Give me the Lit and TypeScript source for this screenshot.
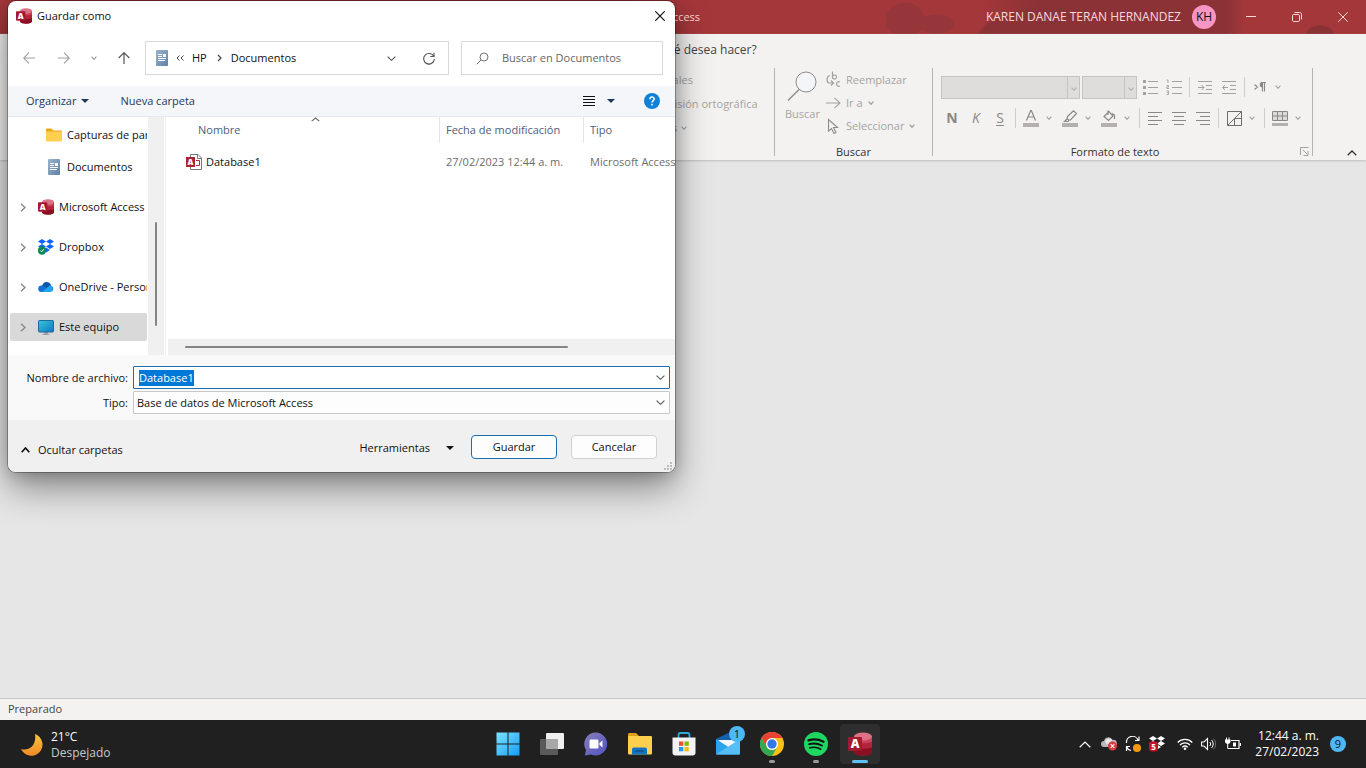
import { LitElement, html, css, svg, TemplateResult, nothing } from "lit";
import { customElement, query } from "lit/decorators.js";
import { classMap } from "lit/directives/class-map.js";

const icon = (w: number, h: number, body: TemplateResult) => html`
  <svg width=${w} height=${h} viewBox="0 0 ${w} ${h}" fill="none" aria-hidden="true">${body}</svg>
`;

const chevronDown = (w = 9, h = 5, sw = 1.1) =>
  icon(w, h, svg`<path d="M.6 .6 L${w / 2} ${h - 0.7} L${w - 0.6} .6" stroke="currentColor" stroke-width=${sw}/>`);
const caretDown = icon(8, 4, svg`<path d="M0 0H8L4 4Z" fill="currentColor"/>`);
const chevronUp = (w = 9, h = 6, sw = 1.6) =>
  icon(w, h, svg`<path d="M.7 ${h - 0.8} L${w / 2} 1 L${w - 0.7} ${h - 0.8}" stroke="currentColor" stroke-width=${sw}/>`);

const accessLogo = (size: number) => html`
  <svg width=${size} height=${size} viewBox="0 0 24 24" aria-hidden="true">
    <path d="M6 4.500V20c0 1.900 4 3.500 9 3.500s9-1.600 9-3.500V4.500Z" fill="#a4262c"/>
    <path d="M6 15c2 2 14 2.500 18 0v5c0 1.900-4 3.500-9 3.500S6 21.900 6 20Z" fill="#8a0f22"/>
    <path d="M6 9c3 2 15 2.500 18 0v6c-3 2-15 2.500-18 0Z" fill="#b3243a"/>
    <path d="M6 4.500v5c3 2 15 2.500 18 0v-5Z" fill="#c9405a"/>
    <ellipse cx="15" cy="4.500" rx="9" ry="4" fill="#dd7284"/>
    <rect x="0" y="5" width="14" height="14" rx="1.200" fill="#a21a30"/>
    <text x="7" y="16.300" text-anchor="middle" font-family="Open Sans" font-weight="800" font-size="12" fill="#fff">A</text>
  </svg>
`;

const documentsIcon = icon(12, 16, svg`
  <defs><linearGradient id="dg" x1="0" y1="0" x2="1" y2="1"><stop offset="0" stop-color="#9bb4cc"/><stop offset="1" stop-color="#5f81a6"/></linearGradient></defs>
  <rect x="0" y="0" width="12" height="16" rx="1" fill="url(#dg)"/>
  <path d="M2 4.500H6M2 6.500H6M2 8.500H10M2 10.500H9" stroke="#fff"/>
  <rect x="7" y="4" width="3" height="3" fill="#fff"/>`);

const folderIcon = icon(16, 14, svg`
  <path d="M0 2C0 1 .5 .5 1.500 .5H5.500L7.500 2.500H15C15.700 2.500 16 3 16 3.500V6H0Z" fill="#e8a914"/>
  <rect x="0" y="3.500" width="16" height="10" rx="1" fill="#ffd04f"/>`);

const dropboxShape = (fill: string) => svg`
  <path d="M4 0L8 2.500 4 5 0 2.500ZM12 0L16 2.500 12 5 8 2.500ZM4 5L8 7.500 4 10 0 7.500ZM12 5L16 7.500 12 10 8 7.500ZM8 8.500L12 11 8 13.500 4 11Z" fill=${fill}/>`;

const dropboxIcon = icon(16, 16, svg`
  <g>${dropboxShape("#0d62fe")}</g>
  <circle cx="4" cy="11.500" r="4.200" fill="#0e8a52"/>
  <path d="M2.300 11.500L3.600 12.800 5.800 10.300" stroke="#fff"/>`);

const oneDriveIcon = icon(16, 10, svg`
  <path d="M4 5C4 2 6 0 8.500 0 11 0 12.600 1.500 13 3.500L8 8Z" fill="#0a56a8"/>
  <path d="M3.500 10A3.300 3.300 0 0 1 3.600 3.400C5 3.200 6 4 7 5L12 10Z" fill="#1173cf"/>
  <path d="M4 10L10.500 4.500C11 3.600 12.500 3.300 13.500 3.800A3.300 3.300 0 0 1 13 10Z" fill="#26a3ee"/>`);

const monitorIcon = icon(16, 15, svg`
  <defs><linearGradient id="mg" x1="0" y1="0" x2="1" y2="1"><stop offset="0" stop-color="#33cbd3"/><stop offset="1" stop-color="#1173c6"/></linearGradient></defs>
  <path d="M6 12H10V14H11.500V15H4.500V14H6Z" fill="#9aa3ab"/>
  <rect x=".5" y=".5" width="15" height="11.500" rx=".8" fill="url(#mg)" stroke="#20699a"/>`);

const databaseFileIcon = icon(16, 16, svg`
  <path d="M4.500 .5H12L15.500 4V15.500H4.500Z" fill="#fff" stroke="#777"/>
  <path d="M11.500 .5V4.500H15.500" stroke="#777"/>
  <path d="M10 6.500H13.500V11.500H10" stroke="#b4263d"/>
  <rect x="0" y="3" width="9" height="10" fill="#a92338"/>
  <text x="4.500" y="11" text-anchor="middle" font-family="Open Sans" font-weight="800" font-size="8" fill="#fff">A</text>`);

const gray = "#a3a1a0";
const lines = (spans: Array<[number, number]>) =>
  svg`${spans.map(([a, b], i) => svg`<path d="M${a} ${1.5 + i * 4}H${b}" stroke="#8a8886"/>`)}`;

const fmt = {
  bullets: icon(16, 16, svg`<path d="M6 2.500H16M6 8.500H16M6 14.500H16" stroke=${gray}/><path d="M1 1H4V4H1ZM1 7H4V10H1ZM1 13H4V16H1Z" fill=${gray}/>`),
  numbers: icon(16, 16, svg`<path d="M6 2.500H16M6 8.500H16M6 14.500H16" stroke=${gray}/><path d="M.5 1H2V4M.5 6.500H2.500V8H.8V9.500H3M.5 12H2.500V15.500H.5M1 13.700H2.500" stroke=${gray} stroke-width=".9"/>`),
  indent: icon(14, 14, svg`<path d="M0 1.500H14M8 5.500H14M8 9.500H14M0 13.500H14M0 7.500H6M3.500 5L6 7.500 3.500 10" stroke=${gray}/>`),
  outdent: icon(14, 14, svg`<path d="M0 1.500H14M8 5.500H14M8 9.500H14M0 13.500H14M.5 7.500H6M3 5L.5 7.500 3 10" stroke=${gray}/>`),
  direction: icon(12, 10, svg`<path d="M.5 2.500L3.500 5 .5 7.500M8.500 .5V9.500M10.500 .5V9.500M7 .5H12" stroke="#8a8886" stroke-width="1.100"/><path d="M8.500 0A2.500 2.500 0 0 0 8.500 5.500Z" fill="#8a8886"/>`),
  fontColor: icon(16, 17, svg`<path d="M3.500 10.500L7.700 .5H8.300L12.500 10.500M5 7H11" stroke="#8a8886" stroke-width="1.200"/><rect y="13" width="16" height="4" fill="#b3b0ad"/>`),
  highlight: icon(16, 17, svg`<path d="M5.500 6.500L11.500 .8 14.500 3.500 8.500 10H6.500L5 8.500ZM5.500 8.500L2.500 11.500H6L7 10" stroke="#8a8886" stroke-width="1.200"/><rect y="13" width="16" height="4" fill="#b3b0ad"/>`),
  fill: icon(16, 17, svg`<path d="M3 6.500L8 1.500 12 6 7.500 10.500ZM7 .5V5M11 3.500L13.500 5V9" stroke="#8a8886" stroke-width="1.200"/><rect y="13" width="16" height="4" fill="#b3b0ad"/>`),
  left: icon(14, 15, lines([[0, 14], [0, 10], [0, 14], [0, 10]])),
  center: icon(14, 15, lines([[0, 14], [2, 12], [0, 14], [2, 12]])),
  right: icon(14, 15, lines([[0, 14], [4, 14], [0, 14], [4, 14]])),
  borders: icon(15, 15, svg`<path d="M.5 .5H14.500V14.500H.5ZM.5 14.500L14.500 .5M7.500 7.500H14.500M7.500 7.500V14.500" stroke="#6f6d6b"/>`),
  rows: icon(16, 15, svg`<path d="M.5 .5H15.500V9.500H.5ZM.5 5H15.500M5.500 .5V9.500M10.500 .5V9.500" stroke="#8a8886" fill="#dcdad8"/><rect y="12" width="16" height="3" fill="#b3b0ad"/>`),
};

@customElement("ribbon-bar")
export class RibbonBar extends LitElement {
  static styles = css`
    :host { display: block; background: #f3f2f1; color: #444; box-shadow: 0 1px 2px #bdbdbd; position: relative; font-size: 11px; }
    svg { display: block; flex: none; }
    button { border: 0; background: none; padding: 0; margin: 0; font: inherit; color: inherit; display: flex; align-items: center; justify-content: center; }
    .tabs { height: 34px; box-sizing: border-box; padding: 0 0 3px 652px; display: flex; align-items: center; font-size: 12px; }
    .groups { display: flex; height: 88px; padding-bottom: 4px; align-items: stretch; }
    .group { border-right: 1px solid #b5b3b1; display: flex; flex-direction: column; justify-content: space-between; box-sizing: border-box; }
    .records { flex: 0 0 775px; padding-left: 656px; color: #a6a4a2; justify-content: flex-start; }
    .records button { height: 24px; justify-content: flex-start; gap: 4px; white-space: nowrap; }
    .label { text-align: center; font-size: 11px; line-height: 8px; color: #333; margin: 0; font-weight: 400; }
    .find { width: 158px; }
    .find-body { display: flex; color: #a6a4a2; gap: 6px; padding-left: 10px; }
    .big { flex-direction: column; gap: 5px; padding-top: 3px; justify-content: flex-start; }
    .stack { display: flex; flex-direction: column; }
    .stack button { height: 23px; gap: 5px; justify-content: flex-start; }
    .format { width: 380px; position: relative; }
    .row { display: flex; align-items: center; height: 24px; padding-left: 7px; }
    .rows { display: flex; flex-direction: column; gap: 7px; padding-top: 7px; }
    .row button { width: 24px; height: 24px; color: #8a8886; font-size: 14px; flex: none; }
    .row .drop { width: 15px; justify-content: flex-start; padding-left: 3px; box-sizing: border-box; color: #a3a1a0; }
    .sep { width: 7px; height: 20px; display: flex; justify-content: center; flex: none; }
    .sep::before { content: ""; width: 1px; background: #cfcdcb; }
    .bold { font-weight: 700; }
    .italic { font-style: italic; }
    .under { text-decoration: underline; text-underline-offset: 2px; }
    .combo { display: grid; grid-template-columns: 1fr 13px; height: 23px; color: #b5b3b1; margin-right: 2px; box-sizing: border-box; }
    .combo select { grid-area: 1 / 1 / 2 / 3; appearance: none; border: 1px solid #c6c4c2; background: #dedddc; margin: 0; border-radius: 0; min-width: 0; opacity: 1; }
    .combo .arrow { grid-area: 1 / 2; border-left: 1px solid #c6c4c2; display: flex; align-items: center; justify-content: center; pointer-events: none; z-index: 1; padding-top: 3px; }
    .font { width: 139px; margin-left: 1px; }
    .size { width: 55px; margin-right: 1px; }
    .foot { display: grid; grid-template-columns: 15px 1fr 15px; align-items: center; }
    .foot .label { grid-column: 2; padding-right: 15px; }
    .foot button { color: #a3a1a0; }
    .end { flex: 1; display: flex; align-items: flex-end; justify-content: flex-end; padding-right: 9px; color: #333; }
  `;

  private tool(name: string, body: unknown, drop = false, cls = "") {
    return html`<button class=${cls} aria-label=${name}>${body}</button>${drop
      ? html`<button class="drop" aria-label="${name}: opciones">${chevronDown(6, 4)}</button>`
      : nothing}`;
  }

  render() {
    const sep = html`<span class="sep"></span>`;
    return html`
      <div class="tabs"><span>¿Qué desea hacer?</span></div>
      <div class="groups">
        <section class="group records">
          <button>Totales</button>
          <button>Revisión ortográfica</button>
          <button>Más ${chevronDown(6, 4)}</button>
        </section>
        <section class="group find">
          <div class="find-body">
            <button class="big">
              ${icon(30, 30, svg`<circle cx="19" cy="11" r="10" fill="#f3f5f8" stroke="#8f8d8b"/><path d="M12 18.500L1 29.500" stroke="#8f8d8b" stroke-width="1.400"/>`)}
              Buscar
            </button>
            <div class="stack">
              <button>
                ${icon(15, 17, svg`<path d="M6.500 .5V7.500M6.500 5.500a2 2 0 1 1 0 1M14 11a2.300 2.300 0 1 0 0 4M4 4.500C.5 5 0 11 3 12H7M5 9.500L7.500 12 5 14.500" stroke="#a3a1a0" stroke-width="1.200"/>`)}
                Reemplazar
              </button>
              <button>
                ${icon(15, 12, svg`<path d="M0 6H14M8.500 .8L14 6 8.500 11.200" stroke="#a3a1a0" stroke-width="1.100"/>`)}
                Ir a ${chevronDown(6, 4, 1.4)}
              </button>
              <button>
                ${icon(15, 16, svg`<path d="M2.500 1.500V13L5.500 10.500 8 15.500 10 14.500 7.500 9.500H11.500Z" stroke="#8f8d8b" stroke-width="1.100"/>`)}
                Seleccionar ${chevronDown(6, 4, 1.4)}
              </button>
            </div>
          </div>
          <h2 class="label">Buscar</h2>
        </section>
        <section class="group format">
          <div class="rows">
            <div class="row">
              <div class="combo font"><select disabled aria-label="Fuente"></select><span class="arrow">${chevronDown(6, 4)}</span></div>
              <div class="combo size"><select disabled aria-label="Tamaño de fuente"></select><span class="arrow">${chevronDown(6, 4)}</span></div>
              ${this.tool("Viñetas", fmt.bullets)}${this.tool("Numeración", fmt.numbers)}${sep}
              ${this.tool("Aumentar sangría", fmt.indent)}${this.tool("Disminuir sangría", fmt.outdent)}${sep}
              ${this.tool("Dirección del texto", fmt.direction, true)}
            </div>
            <div class="row">
              ${this.tool("Negrita", "N", false, "bold")}${this.tool("Cursiva", "K", false, "italic")}${this.tool("Subrayado", "S", false, "under")}${sep}
              ${this.tool("Color de fuente", fmt.fontColor, true)}${this.tool("Resaltado", fmt.highlight, true)}${this.tool("Relleno", fmt.fill, true)}${sep}
              ${this.tool("Izquierda", fmt.left)}${this.tool("Centrar", fmt.center)}${this.tool("Derecha", fmt.right)}${sep}
              ${this.tool("Líneas de división", fmt.borders, true)}${sep}
              ${this.tool("Color de fila", fmt.rows, true)}
            </div>
          </div>
          <div class="foot">
            <h2 class="label">Formato de texto</h2>
            <button aria-label="Más opciones de formato">${icon(9, 9, svg`<path d="M8.500 .5H.5V8M3 3L7.500 7.500M8 4V8.500H3.500" stroke="currentColor"/>`)}</button>
          </div>
        </section>
        <div class="end"><button aria-label="Contraer la cinta">${chevronUp(10, 6, 1.3)}</button></div>
      </div>
    `;
  }
}

interface Place { label: string; icon: TemplateResult; nested?: boolean; selected?: boolean }

@customElement("save-dialog")
export class SaveDialog extends LitElement {
  @query("#file-name") private fileName!: HTMLInputElement;

  private places: Place[] = [
    { label: "Capturas de pantalla", icon: folderIcon, nested: true },
    { label: "Documentos", icon: documentsIcon, nested: true },
    { label: "Microsoft Access", icon: accessLogo(16) },
    { label: "Dropbox", icon: dropboxIcon },
    { label: "OneDrive - Personal", icon: oneDriveIcon },
    { label: "Este equipo", icon: monitorIcon, selected: true },
  ];

  firstUpdated() {
    this.fileName.focus();
    this.fileName.select();
  }

  static styles = css`
    :host { display: flex; flex-direction: column; background: #fff; border-radius: 8px; overflow: hidden; font-size: 11px; color: #111;
      box-shadow: 0 0 0 1px rgba(0, 0, 0, .28), 0 16px 36px rgba(0, 0, 0, .42), 0 2px 16px rgba(0, 0, 0, .2); }
    svg { display: block; flex: none; }
    button { border: 0; background: none; padding: 0; margin: 0; font: inherit; color: inherit; display: flex; align-items: center; justify-content: center; }
    .title { display: flex; align-items: center; height: 30px; padding: 0 8px; gap: 5px; }
    .title h1 { font: inherit; margin: 0; flex: 1; }
    .title button { width: 14px; height: 16px; }
    .nav { display: flex; align-items: center; padding: 10px 12px 11px 8px; }
    .nav .step { width: 26px; height: 26px; color: #a0a0a0; }
    .steps { display: flex; flex: 0 0 129px; gap: 9px; }
    .nav .steps .recent { width: 16px; }
    .nav .step.up { color: #555; }
    .address { display: flex; align-items: center; flex: 0 0 304px; box-sizing: border-box; height: 34px; border: 1px solid #d9d9d9; padding: 0 13px 0 10px; gap: 8px; color: #555; }
    .address a { color: #111; text-decoration: none; padding-right: 2px; }
    .address .grow { flex: 1; }
    .address button { width: 13px; height: 16px; margin-left: 16px; }
    .search { display: flex; align-items: center; flex: 1; height: 32px; border: 1px solid #d9d9d9; margin-left: 12px; padding-left: 14px; gap: 13px; color: #777; min-width: 0; }
    input { font: inherit; border: 0; outline: 0; background: none; padding: 0; margin: 0; min-width: 0; }
    .search input { flex: 1; }
    .search input::placeholder { color: #666; opacity: 1; }
    .commands { display: flex; align-items: center; height: 30px; padding: 0 15px 0 18px; background: #f4f6f9; border-bottom: 1px solid #e4e8ee; color: #1e395b; }
    .commands button { gap: 5px; }
    .commands .new { margin-left: 31px; }
    .commands .view { margin-left: auto; gap: 12px; margin-right: 29px; }
    .body { display: grid; grid-template-columns: 140px 16px 2px 1fr; height: 238px; }
    .tree { overflow: hidden; padding: 4px 1px 0 2px; display: flex; flex-direction: column; gap: 12px; }
    .place { display: grid; grid-template-columns: 28px 16px 1fr; align-items: center; height: 28px; flex: none; white-space: nowrap; overflow: hidden; text-align: left; border-radius: 2px; }
    .place svg { justify-self: center; }
    .place .text { padding-left: 5px; overflow: hidden; }
    .place.nested { grid-template-columns: 36px 16px 1fr; }
    .place.nested:first-child { margin-bottom: -8px; }
    .place.selected { background: #d9d9d9; }
    .arrow { color: #8a8a8a; justify-self: start; padding-left: 10px; }
    .vbar { background: #f0f0f0; display: flex; flex-direction: column; align-items: center; padding-top: 105px; }
    .vbar span { width: 2px; height: 104px; background: #858585; border-radius: 1px; }
    .divider { border-right: 1px solid #f0f0f0; box-sizing: border-box; }
    .files { display: flex; flex-direction: column; overflow: hidden; padding-left: 2px; min-width: 0; position: relative; }
    table { border-collapse: separate; border-spacing: 0; table-layout: fixed; width: 580px; }
    th { font-weight: 400; text-align: left; color: #4c607a; height: 26px; padding: 0 6px; border-right: 1px solid #e5e5e5; }
    td { height: 38px; padding: 0 6px; color: #6d6d6d; white-space: nowrap; }
    th.name { padding-left: 30px; }
    .file { display: flex; align-items: center; gap: 4px; color: #111; padding-left: 12px; }
    .sort { position: absolute; left: 145px; top: 0; color: #666; }
    .hbar { margin-top: auto; height: 16px; background: #f0f0f0; display: flex; align-items: center; padding-left: 17px; }
    .hbar span { width: 383px; height: 2px; background: #858585; border-radius: 1px; }
    .fields { background: #f9f9f9; display: grid; grid-template-columns: 120px 1fr; column-gap: 5px; row-gap: 2px; padding: 11px 5px 6px 0; align-items: center; }
    .fields label { text-align: right; }
    .field { height: 23px; box-sizing: border-box; display: grid; grid-template-columns: 1fr 18px; border: 1px solid #c8c8c8; background: #fdfdfd; color: #555; align-items: center; border-radius: 1px; }
    .field.active { border-color: #1a6eb4; background: #fff; }
    .field input { padding-left: 5px; color: #111; }
    .field input::selection { background: #0078d7; color: #fff; }
    .field select { grid-area: 1 / 1 / 2 / 3; appearance: none; border: 0; background: none; font: inherit; color: #111; padding: 0 0 0 3px; margin: 0; outline: 0; }
    .field .mark { grid-area: 1 / 2; pointer-events: none; display: flex; justify-content: center; }
    .footer { background: #f0f0f0; display: flex; align-items: center; height: 52px; padding: 0 18px 0 13px; position: relative; }
    .hide { gap: 8px; padding-top: 8px; }
    .tools { margin-left: auto; gap: 16px; padding-top: 3px; margin-right: 17px; }
    .action { width: 86px; height: 24px; box-sizing: border-box; border: 1px solid #d0d0d0; border-radius: 4px; background: #fdfdfd; margin-top: 2px; }
    .action.primary { border-color: #1a6eb4; margin-right: 14px; }
    .grip { position: absolute; right: 3px; bottom: 2px; }
  `;

  render() {
    return html`
      <div class="title">
        ${accessLogo(16)}
        <h1>Guardar como</h1>
        <button aria-label="Cerrar">${icon(10, 10, svg`<path d="M.3 .3L9.700 9.700M9.700 .3L.3 9.700" stroke="#111" stroke-width="1.200"/>`)}</button>
      </div>
      <div class="nav">
        <div class="steps">
          <button class="step" aria-label="Atrás">${icon(12, 12, svg`<path d="M12 6H.7M6 .7L.7 6 6 11.300" stroke="currentColor" stroke-width="1.100"/>`)}</button>
          <button class="step" aria-label="Adelante">${icon(12, 12, svg`<path d="M0 6H11.300M6 .7L11.300 6 6 11.300" stroke="currentColor" stroke-width="1.100"/>`)}</button>
          <button class="step recent" aria-label="Recientes">${chevronDown(6, 4, 1.2)}</button>
          <button class="step up" aria-label="Subir">${icon(12, 12, svg`<path d="M6 12V.7M.7 6L6 .7 11.300 6" stroke="currentColor" stroke-width="1.200"/>`)}</button>
        </div>
        <nav class="address" aria-label="Ruta">
          ${documentsIcon}
          ${icon(8, 6, svg`<path d="M3.500 .5L1 3 3.500 5.500M7.500 .5L5 3 7.500 5.500" stroke="#444"/>`)}
          <a href="#hp">HP</a>
          ${icon(6, 8, svg`<path d="M1 1L4 4 1 7" stroke="#444" stroke-width="1.200"/>`)}
          <a href="#documentos">Documentos</a>
          <span class="grow"></span>
          <button aria-label="Ubicaciones anteriores">${chevronDown(9, 5)}</button>
          <button aria-label="Actualizar">${icon(12, 13, svg`<path d="M10.800 4.500A5.300 5.300 0 1 0 11.300 7M11 .8V4.500H7.300" stroke="currentColor" stroke-width="1.100"/>`)}</button>
        </nav>
        <label class="search">
          ${icon(13, 13, svg`<circle cx="8" cy="5" r="4" stroke="currentColor" stroke-width="1"/><path d="M5 8L.7 12.300" stroke="currentColor"/>`)}
          <input type="search" placeholder="Buscar en Documentos" aria-label="Buscar en Documentos">
        </label>
      </div>
      <div class="commands">
        <button>Organizar ${caretDown}</button>
        <button class="new">Nueva carpeta</button>
        <button class="view" aria-label="Cambiar la vista">
          ${icon(12, 11, svg`<path d="M0 .5H12M0 3.500H12M0 6.500H12M0 9.500H12" stroke="#111"/>`)}${caretDown}
        </button>
        <button aria-label="Ayuda">${icon(16, 16, svg`<circle cx="8" cy="8" r="8" fill="#1081d8"/><path d="M5.900 6.200C5.900 3.300 10.200 3.500 10.200 6 10.200 7.600 8 7.600 8 9.600" stroke="#fff" stroke-width="1.500"/><rect x="7.200" y="10.800" width="1.600" height="1.600" fill="#fff"/>`)}</button>
      </div>
      <div class="body">
        <div class="tree">
          ${this.places.map(
            (p) => html`<button class=${classMap({ place: true, nested: !!p.nested, selected: !!p.selected })}>
              <span class="arrow">${p.nested ? nothing : icon(6, 9, svg`<path d="M1 .8L5 4.500 1 8.200" stroke="currentColor" stroke-width="1.500"/>`)}</span>
              ${p.icon}<span class="text">${p.label}</span>
            </button>`
          )}
        </div>
        <div class="vbar"><span></span></div>
        <div class="divider"></div>
        <div class="files">
          <table>
            <colgroup><col style="width:272px"><col style="width:144px"><col></colgroup>
            <thead><tr><th class="name">Nombre</th><th>Fecha de modificación</th><th>Tipo</th></tr></thead>
            <tbody>
              <tr>
                <td><span class="file">${databaseFileIcon}Database1</span></td>
                <td>27/02/2023 12:44 a. m.</td>
                <td>Microsoft Access Database</td>
              </tr>
            </tbody>
          </table>
          <span class="sort">${chevronUp(9, 5, 1.1)}</span>
          <div class="hbar"><span></span></div>
        </div>
      </div>
      <div class="fields">
        <label for="file-name">Nombre de archivo:</label>
        <div class="field active">
          <input id="file-name" value="Database1">
          <span class="mark">${chevronDown(9, 5)}</span>
        </div>
        <label for="file-type">Tipo:</label>
        <div class="field">
          <select id="file-type"><option>Base de datos de Microsoft Access</option></select>
          <span class="mark">${chevronDown(9, 5)}</span>
        </div>
      </div>
      <div class="footer">
        <button class="hide">${chevronUp(9, 6, 1.7)} Ocultar carpetas</button>
        <button class="tools">Herramientas ${caretDown}</button>
        <button class="action primary">Guardar</button>
        <button class="action">Cancelar</button>
        <span class="grip">${icon(8, 8, svg`<path d="M6 0H8V2H6ZM3 3H5V5H3ZM6 3H8V5H6ZM0 6H2V8H0ZM3 6H5V8H3ZM6 6H8V8H6Z" fill="#bcbcbc"/>`)}</span>
      </div>
    `;
  }
}

const taskIcons = {
  start: icon(24, 24, svg`
    <defs><linearGradient id="wg" x1="0" y1="0" x2="1" y2="1"><stop offset="0" stop-color="#7be4fd"/><stop offset="1" stop-color="#149cf5"/></linearGradient></defs>
    <path d="M.5 .5H11.500V11.500H.5ZM12.500 .5H23.500V11.500H12.500ZM.5 12.500H11.500V23.500H.5ZM12.500 12.500H23.500V23.500H12.500Z" fill="url(#wg)"/>`),
  tasks: icon(24, 24, svg`<rect x="6" y="1" width="18" height="16" rx="1" fill="#efefef"/><rect x="0" y="7" width="18" height="16" rx="1" fill="#5a5a5a"/><rect x="6" y="7" width="12" height="10" fill="#a7a7a7"/>`),
  chat: icon(24, 24, svg`
    <defs><linearGradient id="cg" x1="0" y1="0" x2="1" y2="1"><stop offset="0" stop-color="#8a7fb8"/><stop offset="1" stop-color="#4f52c4"/></linearGradient></defs>
    <path d="M12 .5A11.500 11.500 0 1 1 7 22.500L.8 23.500 2 18A11.500 11.500 0 0 1 12 .5Z" fill="url(#cg)"/>
    <rect x="5.500" y="7.500" width="9" height="9" rx="1.200" fill="#fff"/><path d="M15.500 11L18.500 8.500V15.500L15.500 13Z" fill="#fff"/>`),
  explorer: icon(24, 24, svg`
    <path d="M0 2.500C0 1.500 .6 1 1.500 1H8L10.500 3.500V7H0Z" fill="#e0a012"/><rect x="0" y="4" width="24" height="18.500" rx="1" fill="#fecf4c"/>
    <path d="M4 22.500V17.500C4 16 5 15.500 6 15.500H17C18.500 15.500 19 16.500 19 17.500V22.500Z" fill="#1273c4"/><path d="M7.500 19H15.500" stroke="#0b4d8f" stroke-width="1.500"/>`),
  store: icon(24, 24, svg`
    <path d="M6.500 6V3C6.500 1.500 7 1 8.500 1H15.500C17 1 17.500 1.500 17.500 3V6" stroke="#2ea7dc" stroke-width="1.800"/>
    <path d="M.5 5.500H23.500V20.500C23.500 22.500 22.500 23.500 20.500 23.500H3.500C1.500 23.500 .5 22.500 .5 20.500Z" fill="#f3f3f3"/>
    <rect x="7" y="9.500" width="4.300" height="4.300" fill="#f0502b"/><rect x="12.500" y="9.500" width="4.300" height="4.300" fill="#7fba00"/>
    <rect x="7" y="15" width="4.300" height="4.300" fill="#1f9be8"/><rect x="12.500" y="15" width="4.300" height="4.300" fill="#fcb813"/>`),
  mail: icon(24, 22, svg`
    <path d="M0 6L12 0 24 6V12H0Z" fill="#1360ad"/><path d="M2.500 7H21.500V16H2.500Z" fill="#f5f7fa"/>
    <path d="M0 6L24 21.500H1C.4 21.500 0 21 0 20.500Z" fill="#2aa4ee"/><path d="M24 6L0 21.500H23C23.600 21.500 24 21 24 20.500Z" fill="#56bff8"/>`),
  chrome: icon(24, 24, svg`
    <circle cx="12" cy="12" r="12" fill="#fbc116"/>
    <path d="M1.600 6A12 12 0 0 1 22.400 6H12L6.800 15Z" fill="#ea4335"/>
    <path d="M1.600 6A12 12 0 0 0 12 24L17.200 15A6 6 0 0 1 6.800 15Z" fill="#34a853"/>
    <circle cx="12" cy="12" r="6" fill="#fff"/><circle cx="12" cy="12" r="4.700" fill="#3477ea"/>`),
  spotify: icon(24, 24, svg`<circle cx="12" cy="12" r="12" fill="#1ed760"/>
    <path d="M4.500 8.300C9 6.900 15 7.300 19.500 9.700" stroke="#121212" stroke-width="2.300" stroke-linecap="round"/>
    <path d="M5.200 12.200C9.500 11 14 11.500 18 13.600" stroke="#121212" stroke-width="1.900" stroke-linecap="round"/>
    <path d="M5.800 15.800C9.500 14.900 13.500 15.300 16.800 17.200" stroke="#121212" stroke-width="1.600" stroke-linecap="round"/>`),
};

@customElement("task-bar")
export class TaskBar extends LitElement {
  static styles = css`
    :host { display: grid; grid-template-columns: 1fr auto 1fr; height: 48px; background: #202020; color: #fff; font-size: 12px; line-height: 16px; }
    svg { display: block; flex: none; }
    button { border: 0; background: none; padding: 0; margin: 0; font: inherit; color: inherit; display: flex; align-items: center; justify-content: center; }
    .weather { justify-self: start; padding: 1px 0 0 20px; gap: 7px; text-align: left; }
    .weather small { display: block; font-size: 12px; color: #c8c8c8; }
    .weather span { display: block; }
    .apps { display: flex; gap: 4px; align-items: center; padding-left: 2px; }
    .app { width: 40px; height: 40px; position: relative; border-radius: 4px; }
    .app.current { background: #2e2e2e; }
    .app .dot { position: absolute; bottom: 1px; left: 17px; width: 6px; height: 3px; border-radius: 2px; background: #9a9a9a; }
    .app.current .dot { left: 12px; width: 16px; background: #5cc0f0; }
    .badge { position: absolute; right: 3px; top: 2px; width: 16px; height: 16px; border-radius: 8px; background: #4cb8f5; color: #111; font-size: 11px; text-align: center; }
    .tray { display: flex; justify-self: end; align-items: center; padding-right: 20px; }
    .tray > button { width: 24px; height: 40px; }
    .tray .quick { width: 80px; gap: 8px; }
    .tray .clock { width: auto; text-align: right; margin: 0 11px 0 6px; min-width: 64px; justify-content: flex-end; }
    .clock span { display: block; white-space: nowrap; }
    .tray .count { width: 16px; height: 16px; border-radius: 8px; background: #4cb8f5; color: #111; font-size: 11px; }
  `;

  private app(name: string, body: unknown, running = false, current = false, badge = "") {
    return html`<button class=${classMap({ app: true, current })} aria-label=${name}>
      ${body}${running || current ? html`<span class="dot"></span>` : nothing}${badge ? html`<span class="badge">${badge}</span>` : nothing}
    </button>`;
  }

  render() {
    return html`
      <button class="weather">
        ${icon(24, 24, svg`
          <defs><linearGradient id="lg" x1="0" y1="0" x2="0" y2="1"><stop offset="0" stop-color="#f9c440"/><stop offset="1" stop-color="#f08a24"/></linearGradient></defs>
          <path d="M15 1A11.200 11.200 0 1 1 1 16C8 18.500 17 13 15 1Z" fill="url(#lg)"/>`)}
        <span><span>21°C</span><small>Despejado</small></span>
      </button>
      <div class="apps">
        ${this.app("Inicio", taskIcons.start)}${this.app("Vista de tareas", taskIcons.tasks)}${this.app("Chat", taskIcons.chat)}
        ${this.app("Explorador de archivos", taskIcons.explorer)}${this.app("Store", taskIcons.store)}
        ${this.app("Correo", taskIcons.mail, false, false, "1")}${this.app("Chrome", taskIcons.chrome, true)}
        ${this.app("Spotify", taskIcons.spotify, true)}${this.app("Access", accessLogo(24), true, true)}
      </div>
      <div class="tray">
        <button aria-label="Iconos ocultos">${chevronUp(12, 7, 1.2)}</button>
        <button aria-label="OneDrive">${icon(16, 14, svg`<path d="M3 10A3 3 0 0 1 3 4 4.500 4.500 0 0 1 11.500 3 3.500 3.500 0 0 1 13 10Z" fill="#b9b9b9"/><path d="M4 4A4.500 4.500 0 0 1 11.500 3L6 8Z" fill="#e8e8e8"/><circle cx="11.500" cy="9" r="4.500" fill="#d93a3f"/><path d="M9.700 7.200L13.300 10.800M13.300 7.200L9.700 10.800" stroke="#fff" stroke-width="1.100"/>`)}</button>
        <button aria-label="Actualizaciones">${icon(16, 16, svg`<path d="M1.500 7A6 6 0 0 1 13 4M14 .5V4.500H10M1.500 15V10.500H5M1.500 10.500A6 6 0 0 0 6 14.500" stroke="#fff" stroke-width="1.200"/><circle cx="12" cy="12" r="4" fill="#f59a10"/>`)}</button>
        <button aria-label="Dropbox">${icon(16, 16, svg`<g>${dropboxShape("#fff")}</g><rect x="0" y="5.500" width="9" height="10" rx="3" fill="#c8102e"/><text x="4.500" y="13.500" text-anchor="middle" font-family="Open Sans" font-weight="700" font-size="8" fill="#fff">5</text>`)}</button>
        <button class="quick" aria-label="Red, volumen y batería">
          ${icon(16, 12, svg`<path d="M.7 4.500A10.300 10.300 0 0 1 15.300 4.500M3 7A7 7 0 0 1 13 7M5.300 9.300A3.900 3.900 0 0 1 10.700 9.300" stroke="#fff" stroke-width="1.200"/><circle cx="8" cy="10.700" r="1.300" fill="#fff"/>`)}
          ${icon(16, 14, svg`<path d="M.6 5H3L6.500 1.500V12.500L3 9H.6Z" stroke="#fff" stroke-width="1.100"/><path d="M8.800 5A2.800 2.800 0 0 1 8.800 9M10.500 3A5.500 5.500 0 0 1 10.500 11" stroke="#fff"/><path d="M12.500 1.500A8 8 0 0 1 12.500 12.500" stroke="#6a6a6a"/>`)}
          ${icon(16, 14, svg`<path d="M6 3.500H14V11.500H5.500M15.500 6V9" stroke="#fff" stroke-width="1.200"/><path d="M8 5.500H11V9.500H8Z" fill="#fff"/><path d="M1.500 .5V3M4 .5V3M2.700 6V11.500H6" stroke="#fff"/><path d="M0 2.500H5.500V5C4.500 7.500 1 7.500 0 5Z" fill="#fff"/>`)}
        </button>
        <button class="clock"><span><span>12:44 a. m.</span><span>27/02/2023</span></span></button>
        <button class="count" aria-label="9 notificaciones">9</button>
      </div>
    `;
  }
}

@customElement("app-root")
export class AppRoot extends LitElement {
  static styles = css`
    :host { display: flex; flex-direction: column; height: 100vh; min-height: 500px; position: relative; overflow: hidden; font-family: "Open Sans", "Noto Sans", sans-serif; font-size: 12px; line-height: 16px; }
    svg { display: block; flex: none; }
    button { border: 0; background: none; padding: 0; margin: 0; font: inherit; color: inherit; display: flex; align-items: center; justify-content: center; }
    .titlebar { flex: none; display: grid; grid-template-columns: 1fr auto 1fr; align-items: center; height: 34px; color: #fbd9da; background:
      radial-gradient(ellipse 20px 18px at 905px 20px, #96363a 94%, transparent),
      radial-gradient(ellipse 18px 10px at 937px 24px, #96363a 94%, transparent),
      radial-gradient(ellipse 75px 34px at 1050px 40px, #8b3236 94%, transparent),
      radial-gradient(ellipse 14px 9px at 1320px 34px, #8b3236 94%, transparent),
      linear-gradient(90deg, transparent 980px, #8b3236 1040px, #8b3236 1225px, transparent 1245px),
      #a4373a; }
    .app-name { font-size: 11px; }
    .who { display: flex; align-items: center; justify-self: end; }
    .account { gap: 11px; margin-right: 12px; }
    .avatar { width: 24px; height: 24px; line-height: 24px; border-radius: 12px; background: #f795c3; color: #111; }
    .win { width: 46px; height: 34px; }
    .work { flex: 1; background: #e6e6e6; }
    .status { flex: none; height: 21px; border-top: 1px solid #c6c6c6; background: #f3f2f1; color: #444; padding-left: 8px; font-size: 11px; line-height: 20px; }
    .dialog { position: absolute; left: 8px; top: 1px; width: 667px; z-index: 2; }
  `;

  render() {
    return html`
      <header class="titlebar">
        <span></span>
        <span class="app-name">Access</span>
        <div class="who">
          <button class="account">KAREN DANAE TERAN HERNANDEZ <span class="avatar">KH</span></button>
          <button class="win" aria-label="Minimizar">${icon(10, 10, svg`<path d="M0 4.500H10" stroke="currentColor"/>`)}</button>
          <button class="win" aria-label="Restaurar">${icon(10, 10, svg`<rect x=".5" y="2.500" width="7" height="7" rx="1.200" stroke="currentColor"/><path d="M2.500 .5H7.500C9 .5 9.500 1 9.500 2.500V7.500" stroke="currentColor"/>`)}</button>
          <button class="win" aria-label="Cerrar">${icon(10, 10, svg`<path d="M.3 .3L9.700 9.700M9.700 .3L.3 9.700" stroke="currentColor"/>`)}</button>
        </div>
      </header>
      <ribbon-bar></ribbon-bar>
      <main class="work"></main>
      <footer class="status">Preparado</footer>
      <task-bar></task-bar>
      <save-dialog class="dialog" role="dialog" aria-label="Guardar como"></save-dialog>
    `;
  }
}
